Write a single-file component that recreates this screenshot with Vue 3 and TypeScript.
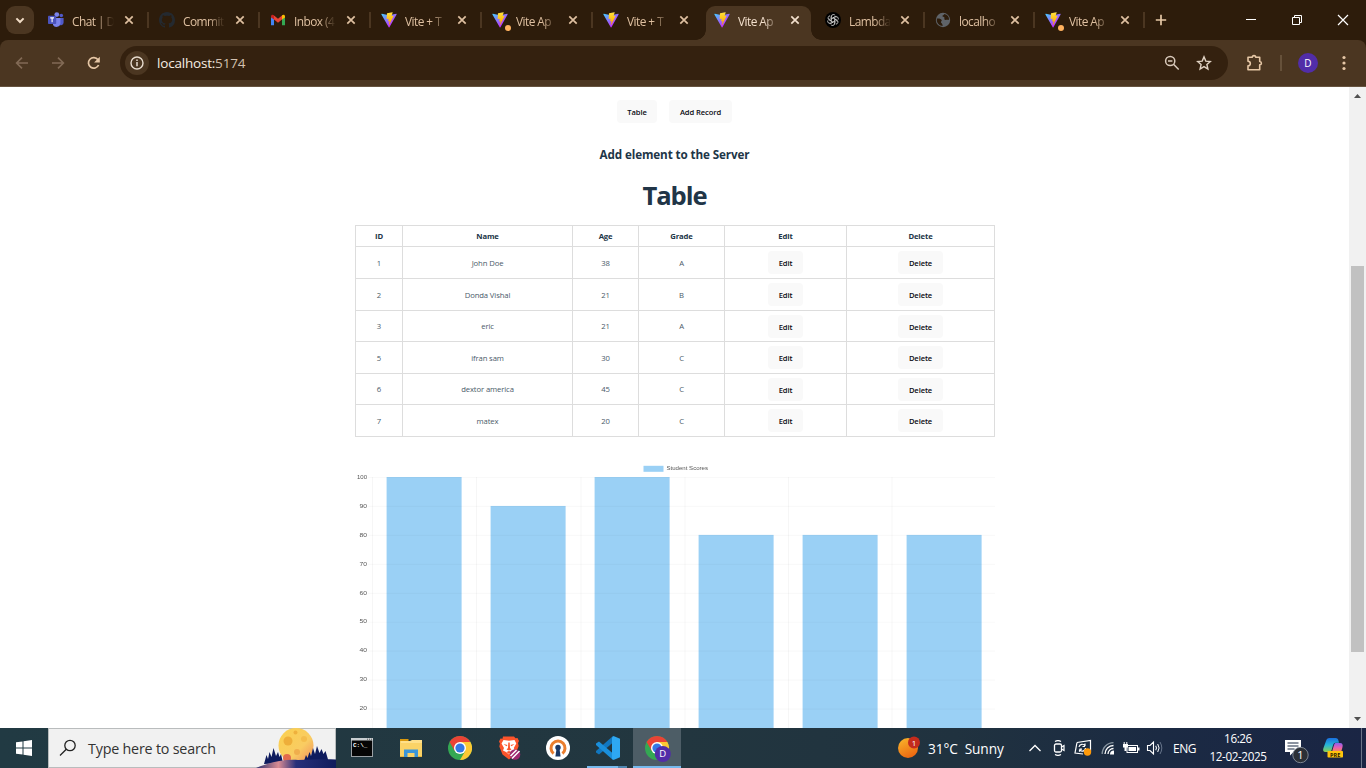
<script setup lang="ts">
interface Tab {
  icon: 'teams' | 'github' | 'gmail' | 'vite' | 'openai' | 'globe'
  title: string
  dot?: boolean
  active?: boolean
  sep: boolean
  narrow?: boolean
}

interface Student {
  id: number
  name: string
  age: number
  grade: string
}

const tabs: Tab[] = [
  { icon: 'teams', title: 'Chat | D', sep: true },
  { icon: 'github', title: 'Commit', sep: true },
  { icon: 'gmail', title: 'Inbox (4', sep: true },
  { icon: 'vite', title: 'Vite + T', sep: true },
  { icon: 'vite', title: 'Vite Ap', dot: true, sep: true },
  { icon: 'vite', title: 'Vite + T', sep: false },
  { icon: 'vite', title: 'Vite Ap', active: true, sep: false },
  { icon: 'openai', title: 'Lambda', sep: true, narrow: true },
  { icon: 'globe', title: 'localho', sep: true, narrow: true },
  { icon: 'vite', title: 'Vite Ap', dot: true, sep: true, narrow: true },
]

const headers = ['ID', 'Name', 'Age', 'Grade', 'Edit', 'Delete']

const students: Student[] = [
  { id: 1, name: 'John Doe', age: 38, grade: 'A' },
  { id: 2, name: 'Donda Vishal', age: 21, grade: 'B' },
  { id: 3, name: 'eric', age: 21, grade: 'A' },
  { id: 5, name: 'ifran sam', age: 30, grade: 'C' },
  { id: 6, name: 'dextor america', age: 45, grade: 'C' },
  { id: 7, name: 'matex', age: 20, grade: 'C' },
]

const scores = [100, 90, 100, 80, 80, 80]
const ticks = [100, 90, 80, 70, 60, 50, 40, 30, 20]
const scoreY = (v: number): number => 17 + (100 - v) * 2.895
const barX = (i: number): number => 31.6 + i * 104
const gridX = [17.5, 121.5, 226, 330, 433.5, 537]
</script>

<template>
  <div class="screen">
    <svg class="defs" width="0" height="0">
      <defs>
        <linearGradient id="viteA" x1="6" y1="33" x2="235" y2="344" gradientUnits="userSpaceOnUse">
          <stop stop-color="#41D1FF" /><stop offset="1" stop-color="#BD34FE" />
        </linearGradient>
        <linearGradient id="viteB" x1="194.6" y1="8.8" x2="236" y2="293" gradientUnits="userSpaceOnUse">
          <stop stop-color="#FFEA83" /><stop offset=".083" stop-color="#FFDD35" /><stop offset="1" stop-color="#FFA800" />
        </linearGradient>
        <linearGradient id="sun" x1="0" y1="0" x2=".5" y2="1">
          <stop stop-color="#f9b92c" /><stop offset="1" stop-color="#ee6a12" />
        </linearGradient>
        <linearGradient id="moon" x1="0" y1="0" x2="1" y2="1">
          <stop stop-color="#fbd04e" /><stop offset=".6" stop-color="#f9cc62" /><stop offset="1" stop-color="#f08a5c" />
        </linearGradient>
        <linearGradient id="hill" x1="0" y1="0" x2="1" y2="0">
          <stop stop-color="#27306e" /><stop offset=".28" stop-color="#d98b93" /><stop offset=".5" stop-color="#27307a" /><stop offset="1" stop-color="#101c5c" />
        </linearGradient>
        <linearGradient id="copA" x1="0" y1="0" x2="0" y2="1">
          <stop stop-color="#1a6fe0" /><stop offset=".5" stop-color="#25b5d8" /><stop offset="1" stop-color="#8fd14b" />
        </linearGradient>
        <linearGradient id="copB" x1="0" y1="0" x2="0" y2="1">
          <stop stop-color="#8a60f0" /><stop offset=".5" stop-color="#e85fb0" /><stop offset="1" stop-color="#f6914a" />
        </linearGradient>
        <filter id="soft" x="-5%" y="-5%" width="110%" height="110%"><feGaussianBlur stdDeviation=".65 .45" /></filter>
      </defs>
    </svg>

    <header class="tabstrip">
      <button class="search-tabs" type="button">
        <svg width="28" height="28" viewBox="0 0 28 28"><path d="M10.400 12.400l3.600 3.600 3.600-3.600" fill="none" stroke="#f1dcc6" stroke-width="2" /></svg>
      </button>
      <div v-for="(t, i) in tabs" :key="i" class="tab" :class="{ active: t.active, narrow: t.narrow }">
        <span class="favicon">
          <svg v-if="t.icon === 'teams'" width="16" height="16" viewBox="0 0 16 16">
            <circle cx="13.3" cy="3.5" r="1.8" fill="#5059c9" /><circle cx="8.8" cy="2.6" r="2.4" fill="#7b83eb" />
            <path d="M10.5 6h5.1v4.6a2.6 2.6 0 0 1-5.1.8z" fill="#5059c9" />
            <path d="M5 6h7.4v5.2a4 4 0 0 1-7.4 1.8z" fill="#7b83eb" />
            <rect x="0" y="3.8" width="8.2" height="8.2" rx=".8" fill="#4b53bc" />
            <path d="M2.2 5.9h3.8M4.1 5.9v4.4" stroke="#fff" stroke-width="1.1" fill="none" />
          </svg>
          <svg v-else-if="t.icon === 'github'" width="16" height="16" viewBox="0 0 16 16">
            <path fill="#24292f" d="M8 0C3.58 0 0 3.58 0 8c0 3.54 2.29 6.53 5.47 7.59.4.07.55-.17.55-.38 0-.19-.01-.82-.01-1.49-2.01.37-2.53-.49-2.69-.94-.09-.23-.48-.94-.82-1.13-.28-.15-.68-.52-.01-.53.63-.01 1.08.58 1.23.82.72 1.21 1.87.87 2.33.66.07-.52.28-.87.51-1.07-1.78-.2-3.64-.89-3.64-3.95 0-.87.31-1.59.82-2.15-.08-.2-.36-1.02.08-2.12 0 0 .67-.21 2.2.82.64-.18 1.32-.27 2-.27s1.36.09 2 .27c1.53-1.04 2.2-.82 2.2-.82.44 1.1.16 1.92.08 2.12.51.56.82 1.27.82 2.15 0 3.07-1.87 3.75-3.65 3.95.29.25.54.73.54 1.48 0 1.07-.01 1.93-.01 2.2 0 .21.15.46.55.38A8.01 8.01 0 0016 8c0-4.42-3.58-8-8-8z" />
          </svg>
          <svg v-else-if="t.icon === 'gmail'" width="16" height="16" viewBox="0 0 16 16">
            <path d="M1 4v9.200h3V7z" fill="#4285f4" /><path d="M15 4v9.200h-3V7z" fill="#34a853" />
            <path d="M4 3.600l4 3.100 4-3.100v4L8 10.800 4 7.600z" fill="#ea4335" />
            <path d="M1 4.200C1 2.500 2.800 2.200 4 3.200v4.400L1 5.400z" fill="#c5221f" /><path d="M15 4.200c0-1.700-1.800-2-3-1v4.400l3-2.200z" fill="#fbbc04" />
          </svg>
          <svg v-else-if="t.icon === 'vite'" width="16" height="16" viewBox="0 0 410 404">
            <path fill="url(#viteA)" d="M399.641 59.5246L215.643 388.545C211.844 395.338 202.084 395.378 198.228 388.618L10.5817 59.5563C6.38087 52.1896 12.6802 43.2665 21.0281 44.7586L205.223 77.6824C206.398 77.8924 207.601 77.8904 208.776 77.6763L389.119 44.8058C397.439 43.2894 403.768 52.1434 399.641 59.5246Z" />
            <path fill="url(#viteB)" d="M292.965 1.5744L156.801 28.2552C154.563 28.6937 152.906 30.5903 152.771 32.8664L144.395 174.33C144.198 177.662 147.258 180.248 150.51 179.498L188.42 170.749C191.967 169.931 195.172 173.055 194.443 176.622L183.18 231.775C182.422 235.487 185.907 238.661 189.532 237.56L212.947 230.446C216.577 229.344 220.065 232.527 219.297 236.242L201.398 322.875C200.278 328.294 207.486 331.249 210.492 326.603L212.5 323.5L323.454 102.072C325.312 98.3645 322.108 94.137 318.036 94.9228L279.014 102.454C275.347 103.161 272.227 99.746 273.262 96.1583L298.731 7.86689C299.767 4.27314 296.636 0.855181 292.965 1.5744Z" />
          </svg>
          <svg v-else-if="t.icon === 'openai'" width="16" height="16" viewBox="0 0 16 16">
            <circle cx="8" cy="8" r="8" fill="#000" />
            <g fill="none" stroke="#d8d8d8" stroke-width=".75">
              <path v-for="k in 6" :key="k" :transform="`rotate(${k * 60} 8 8)`" d="M6.200 8V4.600a2.200 2.200 0 0 1 4-1.200M6.200 6.900l3-1.700a2.200 2.200 0 0 1 2.300 0" />
            </g>
          </svg>
          <svg v-else width="16" height="16" viewBox="0 0 16 16">
            <circle cx="8" cy="8" r="7.200" fill="#5f6368" />
            <path d="M2 6.500c2.300-.2 4.200.3 4.700 1.600.3 1-1 1.300-.7 2.300.3.800 1.600.7 1.700 3.600-3-.2-5.700-2.500-5.900-5.700zM9.300 1.900c-.4 1.300-1.800 1.100-1.900 2.200-.1 1 1.600.7 2 1.500.4.900-.5 1.300.1 2 .8.900 2.800-.3 4.600.4a6.200 6.200 0 0 0-4.800-6.100z" fill="#2d1c0b" />
          </svg>
          <i v-if="t.dot" class="dot"></i>
        </span>
        <span class="tab-title">{{ t.title }}</span>
        <svg class="tab-close" width="10" height="10" viewBox="0 0 10 10"><path d="M1.300 1.300l7.400 7.400M8.700 1.300L1.300 8.700" stroke-width="1.700" stroke="currentColor" /></svg>
        <i v-if="t.sep" class="sep"></i>
      </div>
      <svg class="new-tab" width="12" height="12" viewBox="0 0 12 12"><path d="M6 .8v10.400M.8 6h10.400" stroke="#e6c7a6" stroke-width="1.700" /></svg>
      <div class="window-controls">
        <svg width="46" height="40" viewBox="0 0 46 40"><path d="M18 19.500h10" stroke="#fff" /></svg>
        <svg width="46" height="40" viewBox="0 0 46 40"><path d="M18.500 17.500h7v7h-7zM20.500 17.500v-2h7v7h-2" fill="none" stroke="#fff" /></svg>
        <svg width="46" height="40" viewBox="0 0 46 40"><path d="M18 15l10 10M28 15L18 25" stroke="#fff" stroke-width="1.200" /></svg>
      </div>
    </header>

    <div class="toolbar">
      <svg class="nav" width="36" height="46" viewBox="0 0 36 46"><path d="M28 23H16.800M22 17.600L16.600 23l5.400 5.400" fill="none" stroke="#826a55" stroke-width="1.600" /></svg>
      <svg class="nav" width="36" height="46" viewBox="0 0 36 46"><path d="M16 23h11.200M22 17.600l5.400 5.400-5.400 5.400" fill="none" stroke="#826a55" stroke-width="1.600" /></svg>
      <svg class="nav" width="36" height="46" viewBox="0 0 36 46"><path d="M26.600 25A5.300 5.300 0 1 1 26 19.700" fill="none" stroke="#e6c7a6" stroke-width="1.700" /><path d="M27.800 16.700v5.700h-5.700z" fill="#e6c7a6" /></svg>
      <div class="omnibox">
        <span class="site-info">
          <svg width="24" height="24" viewBox="0 0 24 24"><circle cx="12" cy="12" r="6" fill="none" stroke="#e8dccf" stroke-width="1.400" /><path d="M12 11v4.200M12 8.500v1.500" stroke="#e8dccf" stroke-width="1.500" /></svg>
        </span>
        <span class="url">localhost:<span class="port">5174</span></span>
        <svg class="zoom-ic" width="16" height="16" viewBox="0 0 16 16"><circle cx="6.200" cy="6" r="4.600" fill="none" stroke="#d9cabb" stroke-width="1.500" /><path d="M4 6h4.400M9.500 9.300l5.200 5.200" stroke="#d9cabb" stroke-width="1.500" /></svg>
        <svg class="star-ic" width="16" height="16" viewBox="0 0 16 16"><path d="M8 1.900l1.800 4.200 4.500.4-3.400 3 1 4.500L8 11.600 4.100 14l1-4.500-3.400-3 4.500-.4z" fill="none" stroke="#e0d1c2" stroke-width="1.400" /></svg>
      </div>
      <svg class="ext-ic" width="18" height="18" viewBox="0 0 18 18"><path d="M2 3.300h4.300a1.700 1.700 0 0 1 3.400 0h4v4.200a1.700 1.700 0 0 1 0 3.400v4.800H2v-3.800a2.300 2.300 0 0 0 0-4.600z" fill="none" stroke="#e6c7a6" stroke-width="1.600" stroke-linejoin="round" /></svg>
      <i class="bar-sep"></i>
      <span class="avatar">D</span>
      <svg class="menu-ic" width="4" height="16" viewBox="0 0 4 16" fill="#e6c7a6"><circle cx="2" cy="2.500" r="1.600" /><circle cx="2" cy="8" r="1.600" /><circle cx="2" cy="13.500" r="1.600" /></svg>
    </div>

    <div class="viewport">
      <main class="page">
        <nav class="links">
          <button type="button" class="btn w40">Table</button>
          <button type="button" class="btn w63">Add Record</button>
        </nav>
        <h3>Add element to the Server</h3>
        <h1>Table</h1>
        <div class="table">
          <div class="row head">
            <span v-for="h in headers" :key="h" class="cell">{{ h }}</span>
          </div>
          <div v-for="s in students" :key="s.id" class="row">
            <span class="cell">{{ s.id }}</span>
            <span class="cell">{{ s.name }}</span>
            <span class="cell">{{ s.age }}</span>
            <span class="cell">{{ s.grade }}</span>
            <span class="cell"><button type="button" class="btn w35">Edit</button></span>
            <span class="cell"><button type="button" class="btn w45">Delete</button></span>
          </div>
        </div>
        <svg class="chart" width="640" height="268" viewBox="0 0 640 268">
          <g stroke="#000" stroke-opacity=".035" stroke-width="1">
            <path v-for="x in gridX" :key="x" :d="`M${x} 17V268`" />
          </g>
          <rect v-for="(s, i) in scores" :key="i" :x="barX(i)" :y="scoreY(s)" width="75" height="268" fill="#9ad0f5" />
          <g stroke="#000" stroke-opacity=".022" stroke-width="1.200">
            <path v-for="t in ticks" :key="t" :d="`M13 ${scoreY(t) + 0.5}H640`" />
          </g>
          <rect x="288.500" y="5.800" width="20" height="6" fill="#9ad0f5" />
          <g class="chart-text" filter="url(#soft)">
            <text x="311.500" y="10" textLength="41.500" lengthAdjust="spacingAndGlyphs">Student Scores</text>
            <text v-for="t in ticks" :key="t" :x="t === 100 ? 2 : 4.500" :y="scoreY(t) + 1.700" :textLength="t === 100 ? 10 : 7.500" lengthAdjust="spacingAndGlyphs">{{ t }}</text>
          </g>
        </svg>
      </main>
      <aside class="scrollbar">
        <svg width="17" height="17" viewBox="0 0 17 17"><path d="M5 11h7L8.500 7z" fill="#505050" /></svg>
        <i class="thumb"></i>
        <svg width="17" height="17" viewBox="0 0 17 17"><path d="M5 6h7l-3.500 4z" fill="#505050" /></svg>
      </aside>
    </div>

    <footer class="taskbar">
      <div class="start"><svg width="16" height="16" viewBox="0 0 16 16" fill="#fff"><path d="M0 2.300l6.500-.9v6.100H0zM7.500 1.200L16 0v7.500H7.500zM0 8.500h6.500v6.100L0 13.700zM7.500 8.500H16V16l-8.500-1.200z" /></svg></div>
      <div class="search">
        <svg class="mag" width="18" height="18" viewBox="0 0 18 18"><circle cx="11" cy="6.500" r="5.200" fill="none" stroke="#222" stroke-width="1.300" /><path d="M7.300 10.300L1 16.500" stroke="#222" stroke-width="1.300" /></svg>
        <span>Type here to search</span>
        <svg class="moon" width="80" height="40" viewBox="0 0 80 40">
          <circle cx="40" cy="17.500" r="17.500" fill="url(#moon)" />
          <circle cx="32" cy="13" r="4.500" fill="#eeae3a" /><circle cx="48" cy="11" r="3" fill="#f4bd4c" /><circle cx="39.500" cy="4.500" r="2" fill="#efb13d" /><circle cx="41" cy="24" r="3" fill="#f0ae4c" /><circle cx="31" cy="30" r="4" fill="#e36b4c" />
          <path d="M8 36l2.500-9 1.500 4 1.500-7 2 5 2-9 2.500 8 2-4 1.500 5 1.500-3 2 9zM48 33l2-6 1.500 3 2-6 1.500 4 2-8 2 6 2-8 2.500 7 2-4 2 5 2-3 3 10z" fill="#0e1b5e" />
          <path d="M0 40c12-5 26-9 42-8 14-.500 26-1 38-.500V40z" fill="url(#hill)" />
        </svg>
      </div>
      <div class="app">
        <svg width="24" height="24" viewBox="0 0 24 24"><rect x="1.500" y="2.500" width="21" height="18" fill="#050505" stroke="#9aa0a4" /><path d="M1 2h22v2.500H1z" fill="#c9ced1" /><path d="M17 3.200h1M19 3.200h1M21 3.200h1" stroke="#555" /><text x="3" y="10.500" class="cmd">C:\_</text></svg>
      </div>
      <div class="app">
        <svg width="24" height="24" viewBox="0 0 24 24"><path d="M1 3h8.500v3H1z" fill="#d9980d" /><path d="M1 5h22v16H1z" fill="#fbd367" /><path d="M2 5h9l2-1h10v3H2z" fill="#ffe08a" /><path d="M5 21v-7.500h14V21h-3.500v-4h-7v4z" fill="#3b96d9" /><path d="M1 20h4v1H1zM19 20h4v1h-4z" fill="#e9b63e" /></svg>
      </div>
      <div class="app">
        <svg width="24" height="24" viewBox="0 0 24 24"><circle cx="12" cy="12" r="12" fill="#34a853" /><path d="M12 6h10.400A12 12 0 0 1 12 24l5.200-9z" fill="#fcc934" /><path d="M1.600 6A12 12 0 0 1 22.400 6H12L6.800 15z" fill="#ea4335" /><circle cx="12" cy="12" r="6" fill="#fff" /><circle cx="12" cy="12" r="4.600" fill="#3478e5" /></svg>
      </div>
      <div class="app">
        <svg width="24" height="24" viewBox="0 0 24 24"><path d="M6 .5h11l1.500 1.800 2-.3 1.500 3-1 2 .7 3-3.200 8L12 23.500l-6.500-5-3.200-8 .7-3-1-2 1.500-3 2 .3z" fill="#fb542b" /><path d="M6.500 4l5.500.8 5.500-.8 1.800 3.500-2.500 4.500 1 2.500-2.800 1.500-3 2.500-3-2.500L6 14.500 7 12 4.500 7.500z" fill="#fff" /><path d="M6.500 8l4 1-1 1.200zM17.500 8l-4 1 1 1.200zM11.300 6.500h1.400l.3 5.500 1.500 1.500-2.500 1-2.500-1L11 12zM9.500 16l2.500-1 2.500 1-2.500 2z" fill="#fb542b" /><circle cx="18" cy="18.500" r="5.300" fill="#9d2a70" /><path d="M13.500 20l6-6M15 22.500l7.500-7.500" stroke="#fff" stroke-width="1.500" /></svg>
      </div>
      <div class="app">
        <svg width="24" height="24" viewBox="0 0 24 24"><circle cx="12" cy="12" r="12" fill="#fff" /><path d="M7.600 17.500a7 7 0 1 1 8.800 0" fill="none" stroke="#ea7e2e" stroke-width="3" /><circle cx="12" cy="11.500" r="2.700" fill="#1a3967" /><path d="M10.600 12h2.800l1.200 8.500H9.400z" fill="#1a3967" /></svg>
      </div>
      <div class="app running">
        <svg width="24" height="24" viewBox="0 0 24 24"><path d="M17 0v6.500L3 18.500 0 16.500v-1.500z" fill="#1177c0" /><path d="M17 24v-6.500L3 5.500 0 7.500V9z" fill="#1a8fdb" /><path d="M17.500 0L24 2.800v18.400L17.500 24 16 22.500V1.500z" fill="#2ea8f2" /></svg>
      </div>
      <div class="app current">
        <svg width="28" height="28" viewBox="0 0 28 28"><g transform="translate(2 2)"><circle cx="12" cy="12" r="12" fill="#34a853" /><path d="M12 6h10.400A12 12 0 0 1 12 24l5.200-9z" fill="#fcc934" /><path d="M1.600 6A12 12 0 0 1 22.400 6H12L6.800 15z" fill="#ea4335" /><circle cx="12" cy="12" r="6" fill="#fff" /><circle cx="12" cy="12" r="4.600" fill="#3478e5" /></g><circle cx="19.800" cy="20" r="8" fill="#512da8" /><text x="19.800" y="23.400" text-anchor="middle" class="badge-letter">D</text></svg>
      </div>

      <div class="tray">
        <svg class="weather" width="24" height="24" viewBox="0 0 24 24"><circle cx="11" cy="12" r="10" fill="url(#sun)" /><circle cx="17" cy="6.500" r="6" fill="#c42b1c" /><text x="17" y="9.500" text-anchor="middle" class="weather-n">1</text></svg>
        <span class="temp">31°C&nbsp; Sunny</span>
        <svg class="t-ic chev" width="14" height="14" viewBox="0 0 14 14"><path d="M1.500 10L7 4.500 12.500 10" fill="none" stroke="#fff" stroke-width="1.300" /></svg>
        <svg class="t-ic meet" width="16" height="16" viewBox="0 0 16 16"><rect x="3.500" y="4" width="7" height="8" rx="1.500" fill="none" stroke="#fff" stroke-width="1.300" /><path d="M10.500 7l2.500-1.500v5L10.500 9M4 1.500Q7 -.3 10 1.500M4 14.500q3 1.800 6 0" fill="none" stroke="#fff" stroke-width="1.200" /></svg>
        <svg class="t-ic upd" width="18" height="18" viewBox="0 0 18 18"><path d="M3 3.500L16.500 1.500v11M9 15l-8-1L3 3.500" fill="none" stroke="#fff" stroke-width="1.200" /><path d="M5 8a3.200 3.200 0 0 1 6-1V4.500M11 7.500H8.500M11.500 9a3.200 3.200 0 0 1-6 1.500v2.300M5.500 10.200H8" fill="none" stroke="#fff" stroke-width="1.200" /><circle cx="13.500" cy="13" r="3.700" fill="#ff9a0a" /></svg>
        <svg class="t-ic wifi" width="14" height="14" viewBox="0 0 14 14"><g fill="none" stroke-width="1.300"><path d="M1.200 13A11.300 11.300 0 0 1 12.500 1.700" stroke="#8a97a2" /><path d="M4 13A8.500 8.500 0 0 1 12.500 4.500M7 13A5.500 5.500 0 0 1 12.500 7.500" stroke="#fff" /></g><path d="M9 13.500a4 4 0 0 1 4-4v4z" fill="#fff" /></svg>
        <svg class="t-ic batt" width="18" height="14" viewBox="0 0 18 14"><rect x="5" y="4.500" width="10.500" height="7" fill="none" stroke="#fff" /><path d="M6.500 6h7.500v4H6.500zM16 6.500h1.500v3H16zM1 3h5v3.500H4.500V10h-2V6.500H1z" fill="#fff" /><path d="M2.200 1v2M4.800 1v2" stroke="#fff" /></svg>
        <svg class="t-ic vol" width="18" height="16" viewBox="0 0 18 16"><path d="M1.500 5.500H4l3.500-3.500v12L4 10.500H1.500zM9.700 5.700q1.600 2.300 0 4.600" fill="none" stroke="#fff" stroke-width="1.100" /><path d="M11.700 4q2.800 4 0 8" fill="none" stroke="#fff" /><path d="M14 2q3.600 6 0 12" fill="none" stroke="#66748a" /></svg>
        <span class="lang">ENG</span>
        <div class="clock"><span>16:26</span><span>12-02-2025</span></div>
        <svg class="notif" width="26" height="26" viewBox="0 0 26 26"><path d="M1 2h16v12H9.500L6 17.500V14H1z" fill="#fff" /><path d="M3.500 5h11M3.500 8h11M3.500 11h7" stroke="#1b2a44" stroke-width="1.200" /><circle cx="16.500" cy="17" r="7.700" fill="#2b2f36" stroke="#929aa6" stroke-width=".8" /><text x="16.500" y="21" text-anchor="middle" class="notif-n">1</text></svg>
        <svg class="copilot" width="22" height="22" viewBox="0 0 22 22"><path d="M4 4c.6-2 1.500-3 3.500-3h6c2 0 2.500 1 3 2.800l.5 2h-3.500c-1.500 0-2 1-2.500 2.500l-1.400 4.800C9 14.500 8 15 6.500 15H3.500C1.300 15 .8 13.500 1.300 11.500z" fill="url(#copA)" /><path d="M14 6h4c2.500 0 3 2 2.500 4l-1.300 5H10l2-7c.5-1.400 1-2 2-2z" fill="url(#copB)" /><rect x="5.500" y="14" width="15.500" height="6.500" rx=".8" fill="#ffc40c" /><text x="13.200" y="19.500" text-anchor="middle" class="pre">PRE</text></svg>
        <i class="show-desktop"></i>
      </div>
    </footer>
  </div>
</template>

<style>
html, body { overflow: hidden; background: #fff; }
</style>

<style scoped>
.screen { width: 1366px; height: 768px; display: flex; flex-direction: column; overflow: hidden; font-family: "Open Sans", "Noto Sans", sans-serif; color: #213547; position: relative; background: #2d1c0b; }
.defs { position: absolute; }
svg { display: block; flex: none; }
button { border: 0; padding: 0; font-family: inherit; }

.tabstrip { height: 40px; flex: none; display: flex; align-items: center; background: #2d1c0b; }
.search-tabs { width: 28px; height: 28px; margin-left: 6px; margin-right: 8px; border-radius: 9px; background: #4b3621; flex: none; }
.tab { width: 111px; height: 34px; margin-top: 6px; flex: none; display: flex; align-items: center; padding-left: 6px; padding-bottom: 6px; box-sizing: border-box; position: relative; color: #dfc0a1; }
.tab.narrow { width: 110px; }
.tab.active { color: #f3e0cd; }
.tab.active::before { content: ""; position: absolute; left: -2px; top: 0; width: 105px; height: 34px; background: #4b3621; border-radius: 9px 9px 0 0; }
.tab.active::after { content: ""; position: absolute; left: -12px; bottom: 0; width: 125px; height: 10px; background: radial-gradient(circle at 0 0, transparent 9.500px, #4b3621 10px) 0 0 / 10px 10px no-repeat, radial-gradient(circle at 100% 0, transparent 9.500px, #4b3621 10px) 100% 0 / 10px 10px no-repeat; }
.tab > * { z-index: 1; }
.favicon { width: 16px; height: 16px; position: relative; }
.dot { position: absolute; left: 13px; top: 13px; width: 6px; height: 6px; border-radius: 50%; background: #ffb15e; }
.tab-title { margin-left: 8px; width: 42px; padding-top: 1px; font-size: 11.900px; line-height: 18px; letter-spacing: -.55px; white-space: nowrap; overflow: hidden; -webkit-mask-image: linear-gradient(90deg, #000 60%, transparent 100%); mask-image: linear-gradient(90deg, #000 60%, transparent 100%); }
.tab-close { margin-left: 10px; }
.narrow .tab-close { margin-left: 9px; }
.sep { position: absolute; left: 105px; top: 6px; width: 2px; height: 16px; background: #4b3621; }
.narrow .sep { left: 104px; }
.new-tab { margin-left: 6px; }
.window-controls { display: flex; margin-left: auto; }

.toolbar { height: 46px; flex: none; display: flex; align-items: center; background: #4b3621; border-bottom: 1px solid #66533f; border-radius: 8px 8px 0 0; }
.omnibox { width: 1108px; height: 34px; margin-left: 12px; border-radius: 17px; background: #34210f; display: flex; align-items: center; }
.site-info { width: 24px; height: 24px; margin-left: 5px; border-radius: 50%; background: #4b3621; }
.url { margin-left: 8px; font-size: 13.500px; letter-spacing: -.2px; color: #f7ede2; flex: 1; }
.port { color: #d3c1b0; }
.zoom-ic { margin-right: 16px; }
.star-ic { margin-right: 16px; }
.ext-ic { margin-left: 18px; }
.bar-sep { width: 2px; height: 16px; margin-left: 16px; background: #66513a; }
.avatar { width: 20px; height: 20px; margin-left: 16px; border-radius: 50%; background: #512da8; color: #fff; font-size: 10px; line-height: 20px; text-align: center; }
.menu-ic { margin-left: 24px; }

.viewport { height: 641px; flex: none; display: flex; background: #fff; overflow: hidden; }
.page { width: 1349px; height: 641px; display: flex; flex-direction: column; align-items: center; overflow: hidden; }
.links { display: flex; gap: 12px; margin-top: 13px; }
.btn { height: 23px; box-sizing: border-box; padding-top: 1px; border-radius: 4px; background: #f9f9f9; color: #0c0c14; font-size: 7.600px; font-weight: 600; line-height: 22px; letter-spacing: -.1px; text-align: center; }
.w40 { width: 40px; } .w63 { width: 63px; } .w35 { width: 35px; } .w45 { width: 45px; }
h3 { margin: 22px 0 0; font-size: 11.700px; line-height: 18px; font-weight: 700; letter-spacing: -.12px; }
h1 { margin: 17px 0 0; font-size: 25.600px; line-height: 32px; font-weight: 700; letter-spacing: -1.100px; }
.table { width: 640px; box-sizing: border-box; margin-top: 13px; border-left: 1px solid #ddd; border-top: 1px solid #ddd; display: grid; grid-template-rows: 21px 32px 32px 31px 32px 31px 32px; }
.row { display: grid; grid-template-columns: 47px 170px 66px 86px 122px 148px; }
.cell { padding-left: 1px; border-right: 1px solid #ddd; border-bottom: 1px solid #ddd; display: flex; align-items: center; justify-content: center; font-size: 7.700px; line-height: 12px; letter-spacing: -.12px; color: #4a5a69; }
.head .cell { font-weight: 700; color: #213547; letter-spacing: -.15px; }
.chart { margin-top: 23px; }
.chart-text { font-family: "Liberation Sans", Arial, sans-serif; font-size: 5.800px; fill: #555; }

.scrollbar { width: 17px; height: 641px; background: #f1f1f1; display: flex; flex-direction: column; align-items: center; }
.thumb { width: 13px; height: 386px; margin-top: 162px; margin-bottom: 59px; background: #c1c1c1; }

.taskbar { height: 40px; flex: none; display: flex; background: linear-gradient(90deg, #213a43 0%, #22363f 50%, #20323f 70%, #1b2a43 85%, #1a2544 100%); color: #fff; }
.start { width: 48px; display: flex; align-items: center; justify-content: center; }
.search { width: 288px; height: 40px; box-sizing: border-box; border: 1px solid #b9bcbd; background: #f1f1f1; display: flex; align-items: center; color: #333; font-size: 14.300px; letter-spacing: -.2px; position: relative; }
.mag { margin-left: 10px; margin-right: 11px; }
.moon { position: absolute; right: -1px; top: -1px; }
.app { width: 49.100px; display: flex; align-items: center; justify-content: center; position: relative; }
.search + .app { margin-left: 1px; }
.running { margin-left: 1px; }
.running::after { content: ""; position: absolute; left: 4px; bottom: 0; width: 40px; height: 2px; background: linear-gradient(90deg, #76b9ed 78%, #4f86b0 78%); }
.current { width: 48px; background: #4d5d66; }
.current::after { content: ""; position: absolute; left: 0; bottom: 0; width: 48px; height: 2px; background: #76b9ed; }
.cmd { font: 700 6px "Liberation Mono", monospace; fill: #fff; }
.badge-letter { font-size: 9.500px; fill: #fff; }
.tray { margin-left: auto; width: 469px; display: flex; align-items: center; }
.weather-n { font-size: 8px; fill: #fff; }
.temp { width: 100px; margin-left: 7px; font-size: 13.700px; letter-spacing: -.1px; white-space: nowrap; }
.meet { margin-left: 9px; }
.upd { margin-left: 7px; }
.wifi { margin-left: 9px; }
.batt { margin-left: 7px; }
.vol { margin-left: 6px; }
.lang { margin-left: 9px; width: 25px; font-size: 12px; letter-spacing: -.5px; }
.clock { width: 62px; margin-left: 9px; display: flex; flex-direction: column; align-items: center; font-size: 11.700px; line-height: 18px; letter-spacing: -.4px; white-space: nowrap; margin-top: -2px; }
.notif { margin-left: 15px; margin-top: 5px; }
.notif-n { font-size: 11px; fill: #fff; }
.copilot { margin-left: 12px; }
.pre { font-size: 5.500px; font-weight: 700; fill: #2a1a00; }
.show-desktop { width: 1px; height: 40px; margin-left: auto; margin-right: 4px; background: #6a7588; }
</style>
